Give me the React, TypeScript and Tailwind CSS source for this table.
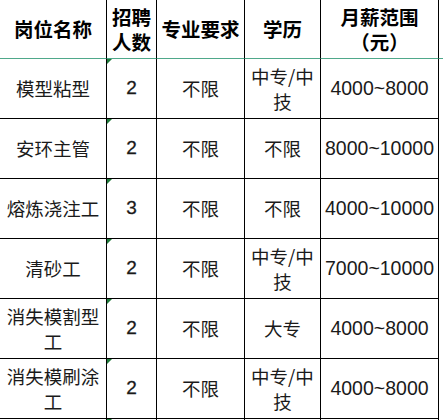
const rows = [
  { name: ["模型粘型"], count: "2", major: "不限", edu: ["中专/中", "技"], salary: "4000~8000" },
  { name: ["安环主管"], count: "2", major: "不限", edu: ["不限"], salary: "8000~10000" },
  { name: ["熔炼浇注工"], count: "3", major: "不限", edu: ["不限"], salary: "4000~10000" },
  { name: ["清砂工"], count: "2", major: "不限", edu: ["中专/中", "技"], salary: "7000~10000" },
  { name: ["消失模割型", "工"], count: "2", major: "不限", edu: ["大专"], salary: "4000~8000" },
  { name: ["消失模刷涂", "工"], count: "2", major: "不限", edu: ["中专/中", "技"], salary: "4000~8000" },
];

const cjk = "font-['Noto_Sans_CJK_SC',sans-serif]";
const latin = "font-['Liberation_Sans','Noto_Sans_CJK_SC',sans-serif]";

function Lines({ lines }: { lines: string[] }) {
  return (
    <span className="block text-center leading-[25px]">
      {lines.map((l, i) => (
        <span key={i}>
          {i > 0 && <br />}
          {l}
        </span>
      ))}
    </span>
  );
}

// green corner marker, like the one spreadsheet apps put on numbers stored as text
function Marker() {
  return (
    <span className="absolute left-0 top-0 h-0 w-0 border-t-[5px] border-r-[5px] border-t-[#1f7a3a] border-r-transparent" />
  );
}

export default function App() {
  const head = `flex items-center justify-center border-b border-r border-b-[#4fa88a] border-r-black font-bold text-[19.5px] text-black ${cjk}`;
  const cell = "relative flex items-center justify-center border-b border-r border-black text-[#1a1a1a]";

  return (
    <div className="h-[420px] w-[443px] overflow-hidden bg-white">
      <div className="grid grid-cols-[107px_50px_88px_76px_118px_5px] grid-rows-[59px_repeat(7,60px)]">
        <div className={head}>岗位名称</div>
        <div className={head}>
          <Lines lines={["招聘", "人数"]} />
        </div>
        <div className={head}>专业要求</div>
        <div className={head}>学历</div>
        <div className={head}>
          <Lines lines={["月薪范围", "（元）"]} />
        </div>
        <div className="border-b border-[#4fa88a]" />

        {rows.map((r, i) => (
          <div key={i} className="contents">
            <div className={`${cell} ${cjk} text-[18.5px]`}>
              <Lines lines={r.name} />
            </div>
            <div className={`${cell} ${latin} text-[19px] [-webkit-text-stroke:0.3px_#1a1a1a]`}>
              <Marker />
              {r.count}
            </div>
            <div className={`${cell} ${cjk} text-[18.5px]`}>{r.major}</div>
            <div className={`${cell} ${cjk} text-[18.5px]`}>
              <Lines lines={r.edu} />
            </div>
            <div className={`${cell} ${latin} text-[19.5px]`}>{r.salary}</div>
            <div />
          </div>
        ))}

        <div className="border-r border-black" />
        <div className="relative border-r border-black">
          <Marker />
        </div>
        <div className="border-r border-black" />
        <div className="border-r border-black" />
        <div className="border-r border-black" />
        <div />
      </div>
    </div>
  );
}
